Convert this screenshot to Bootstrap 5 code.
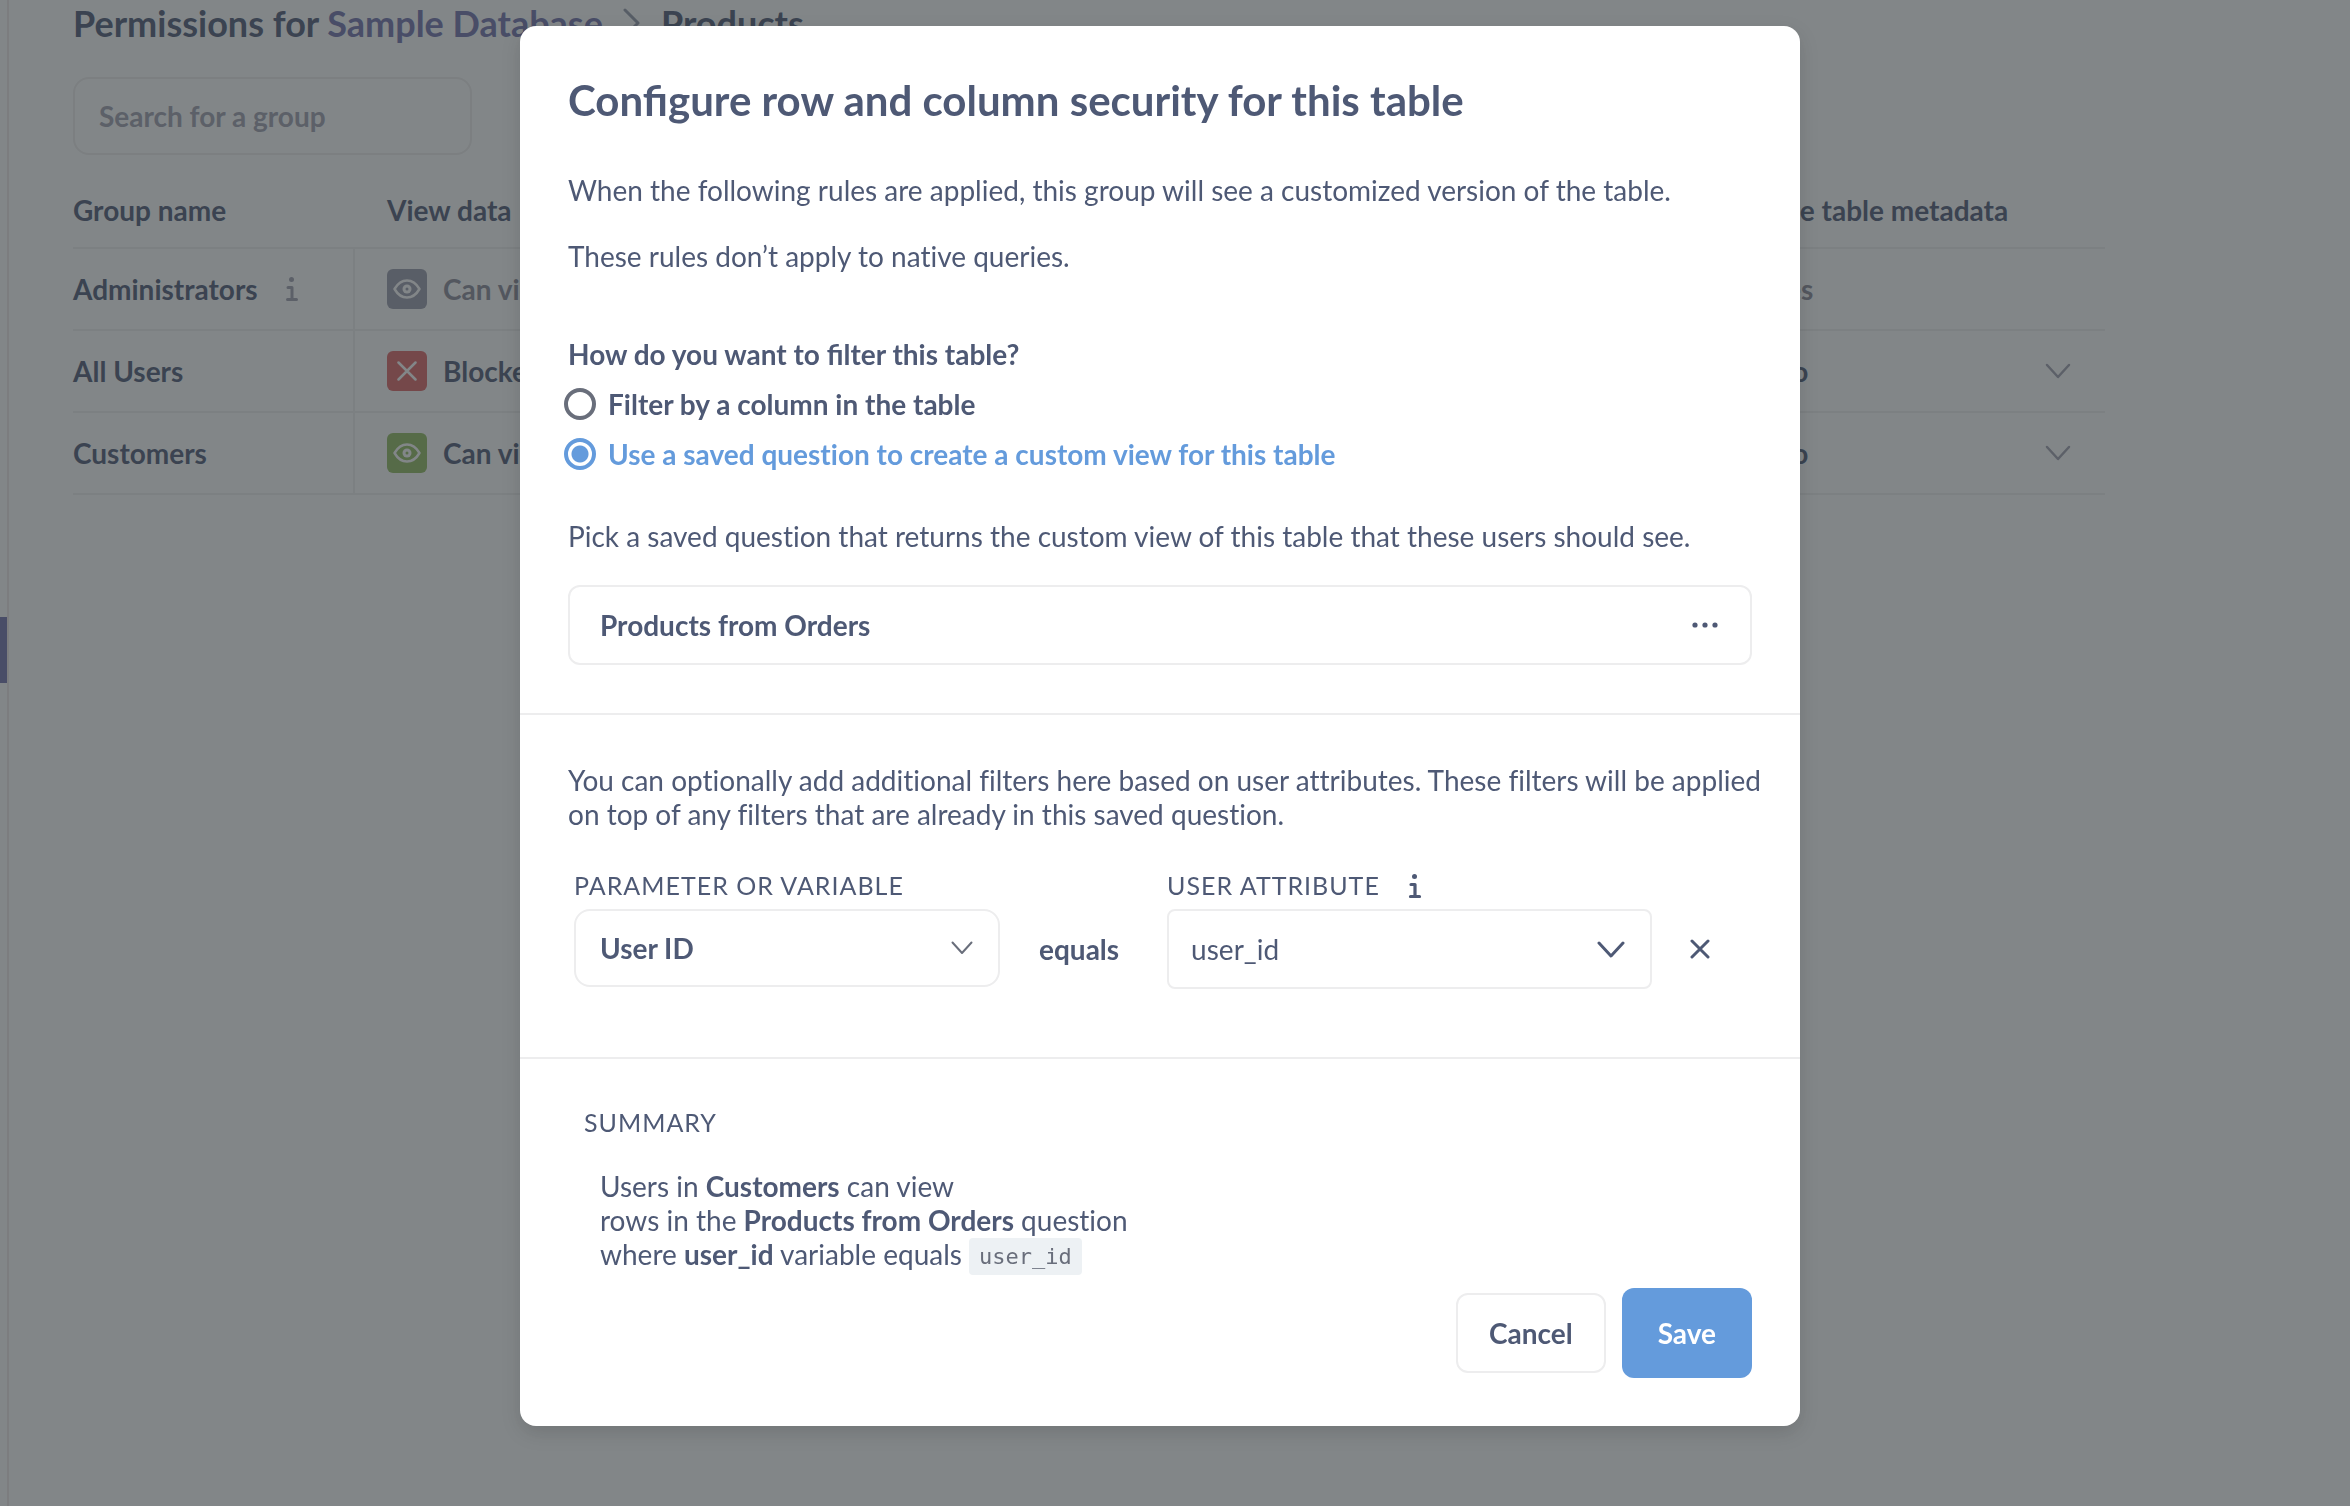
<!DOCTYPE html>
<html lang="en">
<head>
<meta charset="utf-8">
<meta name="viewport" content="width=device-width, initial-scale=1">
<title>Permissions for Sample Database</title>
<link href="https://cdn.jsdelivr.net/npm/bootstrap@5.3.0/dist/css/bootstrap.min.css" rel="stylesheet">
<style>
  :root {
    --ink: #4e5975;
    --ink-muted: #949aab;
    --line: #ededee;
    --brand: #649bdc;
    --admin: #7172ad;
  }
  body {
    font-family: Lato, "Liberation Sans", sans-serif;
    font-size: 28px;
    line-height: 34px;
    color: var(--ink);
    overflow: hidden;
  }
  svg { display: block; flex: none; fill: none; stroke: currentColor; stroke-linecap: round; stroke-linejoin: round; }
  strong, b { font-weight: 700; }

  /* Permissions page */
  .side-rail { width: 9px; border-right: 2px solid #f0e8e8; padding-top: 617px; }
  .rail-active { width: 7px; height: 66px; background: var(--admin); }
  .perm-page { padding: 0 245px 0 64px; }
  .perm-title { font-size: 36px; line-height: 44px; font-weight: 700; margin: 1px 0 32px; gap: 20px; }
  .perm-title a { color: var(--admin); text-decoration: none; }
  .perm-title svg { color: var(--ink-muted); }
  .group-search {
    width: 399px; height: 78px; padding: 0 24px; border: 2px solid #efeeee; border-radius: 16px;
    font-size: 28px; font-weight: 700; color: var(--ink);
  }
  .group-search::placeholder { color: #a0a0b0; opacity: 1; }
  .perm-table { width: 100%; table-layout: fixed; border-collapse: separate; border-spacing: 0; margin-top: 18px; font-weight: 700; }
  .perm-table th, .perm-table td { border-bottom: 2px solid #f0efef; padding: 20px 34px 20px 32px; text-align: left; font-weight: 700; vertical-align: middle; }
  .perm-table tbody th, .perm-table tbody td { height: 82px; padding-top: 0; padding-bottom: 0; }
  .perm-table th:first-child { padding-left: 0; padding-right: 0; width: 282px; }
  .perm-table tbody th { border-right: 2px solid #f0efef; }
  .perm-table .col-manage { width: 422px; padding-right: 0; }
  .name-cell { gap: 28px; }
  .cell-btn { border: 0; background: none; padding: 0; width: 100%; font-weight: 700; color: inherit; gap: 16px; text-align: left; }
  .cell-muted { color: #8b8a98; }
  .state-icon { width: 40px; height: 40px; border-radius: 6px; color: #fff; flex: none; }
  .state-off { background: #9a9bac; }
  .state-no { background: #df6464; }
  .state-yes { background: #91bb5f; }
  .chev-muted { color: #a0a0b0; }

  /* Dialog */
  .modal-backdrop { --bs-backdrop-bg: #2e3538; --bs-backdrop-opacity: .6; }
  .modal.show { overflow: hidden; padding-right: 30px; }
  .sec-dialog { max-width: 1280px; margin: 26px auto; }
  .sec-content { border: 0; border-radius: 16px; color: var(--ink); box-shadow: 0 7px 20px rgba(0, 0, 0, .13); }
  .sec-part { padding: 48px; }
  .sec-part + .sec-part { border-top: 2px solid var(--line); }
  .sec-title { font-size: 42px; line-height: 53px; font-weight: 700; margin: 0 0 46px; }
  .sec-part p { margin: 0 0 32px; font-variant-ligatures: none; }
  .filter-mode { margin-top: 64px; }
  .sec-question { float: none; font-size: 28px; line-height: 34px; font-weight: 700; margin: 0; }
  .pick-row { display: flex; align-items: center; gap: 12px; margin: 16px 0 0 -4px; height: 34px; font-weight: 700; font-variant-ligatures: none; }
  .pick-row input {
    appearance: none; flex: none; margin: 0; width: 32px; height: 32px; border-radius: 50%;
    border: 4px solid #696e7b; background: #fff;
  }
  .pick-row input:checked { border-color: var(--brand); background: radial-gradient(circle, var(--brand) 8px, #fff 9px); }
  .pick-row:has(input:checked) { color: var(--brand); }
  .pick-help { padding-top: 48px; }
  .question-btn {
    width: 100%; height: 80px; padding: 0 32px 0 30px; border: 2px solid var(--line); border-radius: 12px;
    background: #fff; font-weight: 700; color: var(--ink);
  }
  .map-row { margin-top: 39px; padding-left: 6px; }
  .caps-label { font-size: 25px; line-height: 30px; letter-spacing: 1px; text-transform: uppercase; display: block; margin-bottom: 9px; }
  .attr-head { gap: 28px; }
  .pick-box { display: grid; align-items: center; }
  .pick-box > * { grid-area: 1 / 1; }
  .pick-box svg { justify-self: end; margin-right: 27px; pointer-events: none; }
  .pick-box select { appearance: none; width: 100%; border: 2px solid var(--line); background: #fff; color: var(--ink); font-size: 28px; }
  .pick-param { width: 426px; }
  .pick-param select { height: 78px; border-radius: 16px; padding: 0 24px; font-weight: 700; }
  .pick-param svg { color: #696e7b; }
  .pick-attr { width: 485px; }
  .pick-attr select { height: 80px; border-radius: 8px; padding: 0 22px; }
  .map-equals { font-weight: 700; height: 80px; padding: 0 48px 0 39px; }
  .map-remove { border: 0; background: none; color: var(--ink); height: 80px; padding: 0 0 0 38px; }
  .map-part { padding-bottom: 68px; }
  .summary-text { padding: 32px 0 17px 32px; font-variant-ligatures: none; }
  .summary-text code { display: inline-block; line-height: 38px; height: 37px; margin-bottom: -4px; font-family: "DejaVu Sans Mono", "Liberation Mono", monospace; font-size: 22px; color: #696e7b; background: #edf1f4; border-radius: 4px; padding: 0 10px; vertical-align: bottom; }
  .btn-plain, .btn-save { font-size: 28px; line-height: 34px; font-weight: 700; border-radius: 12px; }
  .btn-plain { height: 80px; padding: 0 31px; border: 2px solid var(--line); background: #fff; color: var(--ink); }
  .btn-save { height: 90px; padding: 0 36px; border: 0; background: var(--brand); color: #fff; }
</style>
<script src="https://cdn.jsdelivr.net/npm/bootstrap@5.3.0/dist/js/bootstrap.bundle.min.js"></script>
</head>
<body>

<div class="d-flex vh-100">
  <aside class="side-rail flex-shrink-0"><div class="rail-active"></div></aside>
  <main class="perm-page flex-grow-1">
    <h1 class="perm-title d-flex align-items-center">
      <span>Permissions for <a href="#">Sample Database</a></span>
      <svg width="18" height="30" viewBox="0 0 18 30" stroke-width="3"><path d="M2 2 15 15 2 28"/></svg>
      <span>Products</span>
    </h1>
    <input class="group-search d-block" type="text" placeholder="Search for a group" aria-label="Search for a group">
    <table class="perm-table">
      <thead>
        <tr><th>Group name</th><th>View data</th><th class="col-manage">Manage table metadata</th></tr>
      </thead>
      <tbody>
        <tr>
          <th scope="row"><div class="name-cell d-flex align-items-center"><span>Administrators</span>
            <svg class="chev-muted" width="12" height="24" viewBox="0 0 12 24" stroke-width="3"><circle cx="5.500" cy="2.500" r="2.500" fill="currentColor" stroke="none"/><path d="M2 10.500h4v12M1.500 22.500h9"/></svg></div></th>
          <td><div class="cell-muted d-flex align-items-center gap-3"><span class="state-icon state-off d-flex align-items-center justify-content-center"><svg width="28" height="20" viewBox="0 0 28 20" stroke-width="2.500"><path d="M1.500 10C5 4 9 1.500 14 1.500S23 4 26.500 10C23 16 19 18.500 14 18.500S5 16 1.500 10Z"/><circle cx="14" cy="10" r="4.500" fill="currentColor" stroke="none"/><circle cx="14" cy="10" r="1.500" fill="#9a9bac" stroke="none"/></svg></span>Can view</div></td>
          <td><div class="cell-muted d-flex align-items-center gap-3"><span class="state-icon state-off"></span>Yes</div></td>
        </tr>
        <tr>
          <th scope="row">All Users</th>
          <td><button class="cell-btn d-flex align-items-center" type="button"><span class="state-icon state-no d-flex align-items-center justify-content-center"><svg width="20" height="20" viewBox="0 0 20 20" stroke-width="2.500"><path d="M1.500 1.500l17 17M18.500 1.500l-17 17"/></svg></span>Blocked</button></td>
          <td><button class="cell-btn d-flex align-items-center" type="button"><span class="state-icon state-no"></span><span class="flex-grow-1">No</span><svg class="chev-muted" width="26" height="16" viewBox="0 0 26 16" stroke-width="2.500"><path d="M2 2 13 14 24 2"/></svg></button></td>
        </tr>
        <tr>
          <th scope="row">Customers</th>
          <td><button class="cell-btn d-flex align-items-center" type="button"><span class="state-icon state-yes d-flex align-items-center justify-content-center"><svg width="28" height="20" viewBox="0 0 28 20" stroke-width="2.500"><path d="M1.500 10C5 4 9 1.500 14 1.500S23 4 26.500 10C23 16 19 18.500 14 18.500S5 16 1.500 10Z"/><circle cx="14" cy="10" r="4.500" fill="currentColor" stroke="none"/><circle cx="14" cy="10" r="1.500" fill="#91bb5f" stroke="none"/></svg></span>Can view</button></td>
          <td><button class="cell-btn d-flex align-items-center" type="button"><span class="state-icon state-no"></span><span class="flex-grow-1">No</span><svg class="chev-muted" width="26" height="16" viewBox="0 0 26 16" stroke-width="2.500"><path d="M2 2 13 14 24 2"/></svg></button></td>
        </tr>
      </tbody>
    </table>
  </main>
</div>

<div class="modal-backdrop show"></div>
<div class="modal show d-block" tabindex="-1" role="dialog" aria-labelledby="sec-title">
  <div class="modal-dialog sec-dialog">
    <form class="modal-content sec-content">
      <section class="sec-part">
        <h2 class="sec-title" id="sec-title">Configure row and column security for this table</h2>
        <p>When the following rules are applied, this group will see a customized version of the table.</p>
        <p>These rules don’t apply to native queries.</p>
        <fieldset class="filter-mode">
          <legend class="sec-question">How do you want to filter this table?</legend>
          <label class="pick-row"><input type="radio" name="mode">Filter by a column in the table</label>
          <label class="pick-row"><input type="radio" name="mode" checked>Use a saved question to create a custom view for this table</label>
        </fieldset>
        <p class="pick-help">Pick a saved question that returns the custom view of this table that these users should see.</p>
        <button class="question-btn d-flex align-items-center justify-content-between" type="button">Products from Orders
          <svg width="26" height="8" viewBox="0 0 26 8"><g fill="currentColor" stroke="none"><circle cx="3" cy="4" r="2.600"/><circle cx="13" cy="4" r="2.600"/><circle cx="23" cy="4" r="2.600"/></g></svg>
        </button>
      </section>

      <section class="sec-part map-part">
        <p class="mb-0 text-nowrap">You can optionally add additional filters here based on user attributes. These filters will be applied<br>on top of any filters that are already in this saved question.</p>
        <div class="map-row d-flex align-items-end">
          <div class="align-self-start">
            <label class="caps-label" for="param">Parameter or variable</label>
            <div class="pick-box pick-param">
              <select id="param"><option>User ID</option></select>
              <svg width="22" height="14" viewBox="0 0 22 14" stroke-width="2"><path d="M1.500 1.500 11 12 20.500 1.500"/></svg>
            </div>
          </div>
          <div class="map-equals d-flex align-items-center">equals</div>
          <div>
            <div class="attr-head d-flex align-items-start">
              <label class="caps-label" for="attr">User attribute</label>
              <svg class="mt-1" width="14" height="24" viewBox="0 0 12 24" stroke-width="3.200"><circle cx="5.500" cy="2.500" r="2.500" fill="currentColor" stroke="none"/><path d="M2 10.500h4v12M1.500 22.500h9"/></svg>
            </div>
            <div class="pick-box pick-attr">
              <select id="attr"><option>user_id</option></select>
              <svg width="28" height="17" viewBox="0 0 28 17" stroke-width="3"><path d="M2 2 14 15 26 2"/></svg>
            </div>
          </div>
          <button class="map-remove d-flex align-items-center" type="button" aria-label="Remove">
            <svg width="20" height="20" viewBox="0 0 20 20" stroke-width="3"><path d="M2 2l16 16M18 2 2 18"/></svg>
          </button>
        </div>
      </section>

      <section class="sec-part">
        <div class="caps-label mb-0 ps-3">Summary</div>
        <div class="summary-text">Users in <strong>Customers</strong> can view<br>rows in the <strong>Products from Orders</strong> question<br>where <strong>user_id</strong> variable equals <code>user_id</code></div>
        <div class="d-flex justify-content-end align-items-center gap-3">
          <button class="btn-plain" type="button">Cancel</button>
          <button class="btn-save" type="submit">Save</button>
        </div>
      </section>
    </form>
  </div>
</div>
</body>
</html>
